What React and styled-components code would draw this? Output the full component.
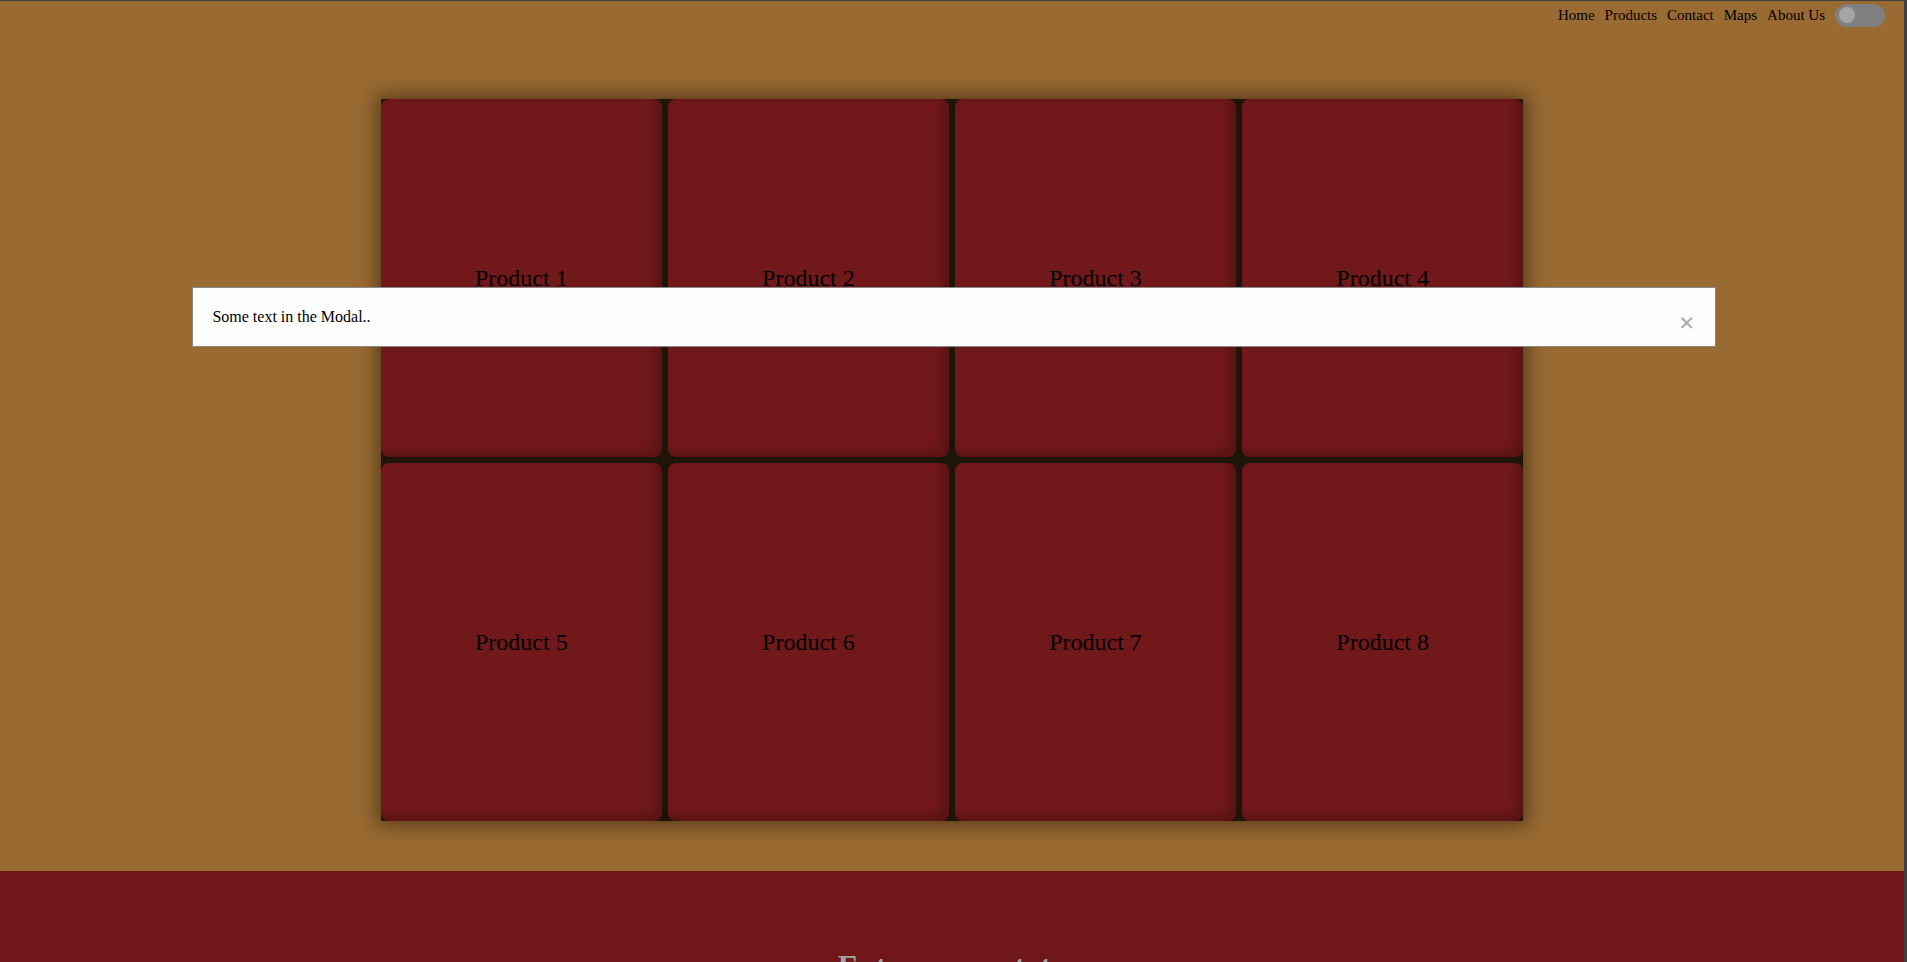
import React, { useState } from "react";
import styled, { createGlobalStyle } from "styled-components";

const GlobalStyle = createGlobalStyle`
  html {
    background: #3f3f3f;
    overflow: hidden;
  }
  body {
    margin: 1px 3px 0 0;
    background: #996a32;
    font-family: "Liberation Serif", "Times New Roman", serif;
    color: #000;
  }
`;

const Nav = styled.nav`
  height: 28px;
  display: flex;
  justify-content: flex-end;
  align-items: center;
  gap: 10px;
  padding-right: 19px;
`;

const NavLink = styled.a`
  font-size: 15px;
  color: #000;
  text-decoration: none;
  cursor: pointer;
`;

const Toggle = styled.button`
  width: 50px;
  height: 23px;
  border: none;
  border-radius: 12px;
  background: #808080;
  padding: 0 4px;
  display: flex;
  align-items: center;
  justify-content: ${(p) => (p.$on ? "flex-end" : "flex-start")};
  cursor: pointer;
`;

const Knob = styled.span`
  width: 16px;
  height: 16px;
  border-radius: 50%;
  background: #a5a5a5;
`;

const Main = styled.main`
  padding: 70px 0 50px;
`;

const Grid = styled.section`
  width: 60%;
  margin: 0 auto;
  display: grid;
  grid-template-columns: repeat(4, 1fr);
  gap: 6px;
  background: #1f1409;
  box-shadow: 0 0 18px 4px rgba(0, 0, 0, 0.45);
`;

const Card = styled.div`
  height: 358px;
  border-radius: 8px;
  background: #71181a;
  box-shadow: inset -7px -6px 10px rgba(0, 0, 0, 0.2);
  display: flex;
  align-items: center;
  justify-content: center;
  font-size: 24px;
`;

const Footer = styled.footer`
  background: #701719;
  padding: 57px 0 40px;
  text-align: center;
`;

const FooterTitle = styled.h1`
  margin: 21px 0;
  font-size: 31px;
  font-weight: bold;
  color: #a3a3a3;
`;

const Overlay = styled.div`
  position: fixed;
  top: 1px;
  left: 2px;
  right: 1px;
  bottom: 0;
  z-index: 10;
`;

const ModalBox = styled.div`
  width: 80%;
  margin: 15% auto 0;
  padding: 20px 20px 20px 19px;
  box-sizing: border-box;
  background: #fefefe;
  border: 1px solid #888;
  font-size: 16px;
`;

const Close = styled.span`
  float: right;
  color: #aaa;
  font-size: 28px;
  font-weight: bold;
  line-height: 32px;
  margin-top: -1px;
  cursor: pointer;
`;

const ModalText = styled.p`
  margin: 0;
`;

const products = [1, 2, 3, 4, 5, 6, 7, 8];
const links = ["Home", "Products", "Contact", "Maps", "About Us"];

const App = () => {
  const [dark, setDark] = useState(false);
  const [open, setOpen] = useState(true);

  return (
    <>
      <GlobalStyle />
      <Nav>
        {links.map((l) => (
          <NavLink key={l}>{l}</NavLink>
        ))}
        <Toggle $on={dark} onClick={() => setDark(!dark)}>
          <Knob />
        </Toggle>
      </Nav>

      <Main>
        <Grid>
          {products.map((n) => (
            <Card key={n}>Product {n}</Card>
          ))}
        </Grid>
      </Main>

      <Footer>
        <FooterTitle>Entre em contato</FooterTitle>
      </Footer>

      {open && (
        <Overlay>
          <ModalBox>
            <Close onClick={() => setOpen(false)}>&times;</Close>
            <ModalText>Some text in the Modal..</ModalText>
          </ModalBox>
        </Overlay>
      )}
    </>
  );
};

export default App;
